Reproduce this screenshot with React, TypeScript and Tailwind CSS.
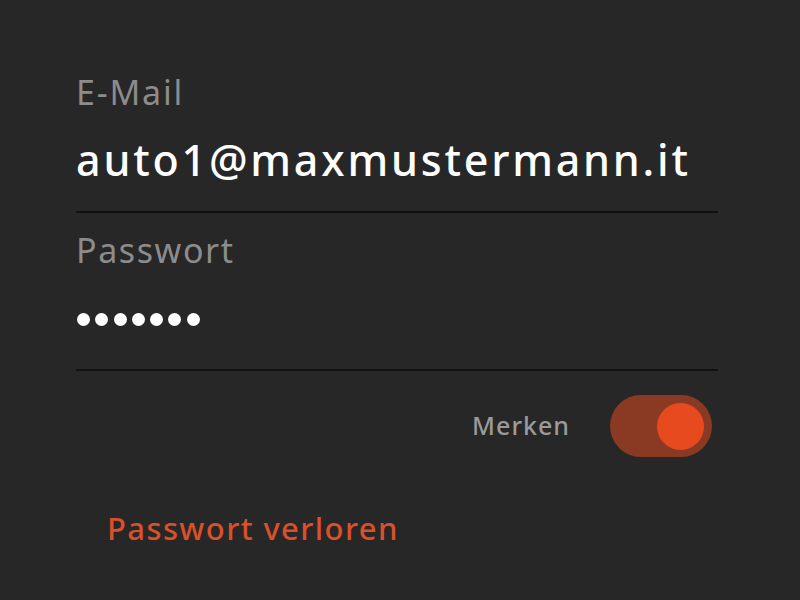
const App = () => {
  return (
    <div
      className="w-[800px] h-[600px] bg-[#272727] overflow-hidden"
      style={{ fontFamily: '"Noto Sans", "Open Sans", sans-serif' }}
    >
      <div className="ml-[76px] w-[642px] pt-[68px]">
        {/* E-Mail */}
        <div className="text-[34px] leading-[48px] tracking-[1.8px] text-[#8c8c8c]">E-Mail</div>
        <div className="mt-[16px] text-[43px] leading-[56px] font-medium text-white tracking-[2.8px] whitespace-nowrap">
          auto1@maxmustermann.it
        </div>
        <div className="mt-[23px] h-[2px] bg-[#111111]" />

        {/* Passwort */}
        <div className="mt-[13px] text-[34px] leading-[48px] tracking-[1.6px] text-[#8c8c8c]">Passwort</div>
        <div className="mt-[17px] h-[56px] flex items-center gap-[5.3px] pl-[1px]">
          {[0, 1, 2, 3, 4, 5, 6].map((i) => (
            <div key={i} className="w-[13px] h-[13px] rounded-full bg-white" />
          ))}
        </div>
        <div className="mt-[22px] h-[2px] bg-[#111111]" />

        {/* Merken */}
        <div className="mt-[24px] flex items-center justify-end gap-[40px] pr-[6px]">
          <span className="text-[25px] font-medium tracking-[1px] text-[#9a9a9a]">Merken</span>
          <div className="w-[102px] h-[62px] rounded-full bg-[#8a3a22] flex items-center justify-end pr-[8px]">
            <div className="w-[47px] h-[47px] rounded-full bg-[#e84a1f]" />
          </div>
        </div>
      </div>

      <div className="ml-[107px] mt-[51px] text-[31px] leading-[40px] font-medium tracking-[1.4px] text-[#d9502a]">
        Passwort verloren
      </div>
    </div>
  );
};

export default App;
